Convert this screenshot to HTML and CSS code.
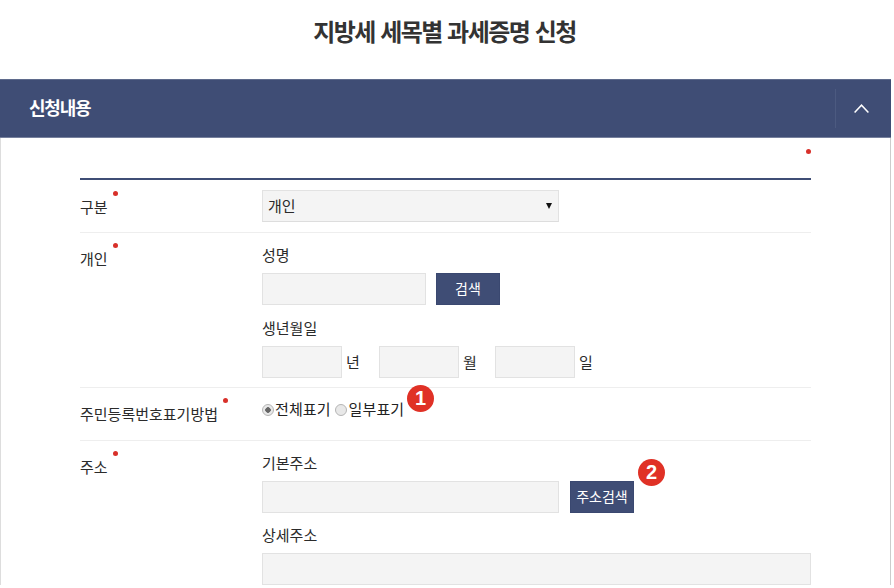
FILE: index.html
```html
<!DOCTYPE html>
<html lang="ko">
<head>
    <meta charset="UTF-8">
    <meta name="viewport" content="width=device-width, initial-scale=1.0">
    <link rel="stylesheet" href="styles.css">
    <title>지방세 세목별 과세증명 신청</title>
</head>
<body>
    <h1 class="page-title">지방세 세목별 과세증명 신청</h1>
    <section class="panel">
        <div class="panel-head">
            <h2 class="panel-title">신청내용</h2>
            <button class="panel-toggle" type="button" aria-label="접기">
                <svg width="15" height="9" viewBox="0 0 15 9"><path d="M.6 8.4 7.5 1.2l6.9 7.2" fill="none" stroke="#fff" stroke-width="1.5"/></svg>
            </button>
        </div>
        <div class="panel-body">
            <span class="dot dot-top"></span>
            <div class="form-table">
                <div class="row row-kind">
                    <div class="label"><span class="req">구분</span></div>
                    <div class="field">
                        <div class="select-wrap">
                            <select class="select"><option>개인</option></select>
                        </div>
                    </div>
                </div>
                <div class="row row-person">
                    <div class="label"><span class="req">개인</span></div>
                    <div class="field">
                        <div class="sub-label">성명</div>
                        <div class="line">
                            <input class="input input-name" type="text">
                            <button class="btn btn-search" type="button">검색</button>
                        </div>
                        <div class="sub-label sub-label-next">생년월일</div>
                        <div class="line line-date">
                            <input class="input input-date" type="text"><span class="unit unit-year">년</span>
                            <input class="input input-date" type="text"><span class="unit unit-month">월</span>
                            <input class="input input-date" type="text"><span class="unit">일</span>
                        </div>
                    </div>
                </div>
                <div class="row row-radio">
                    <div class="label"><span class="req">주민등록번호표기방법</span></div>
                    <div class="field radios">
                        <label class="radio"><input type="radio" name="rrn" checked>전체표기</label>
                        <label class="radio"><input type="radio" name="rrn">일부표기<span class="badge badge-one">1</span></label>
                    </div>
                </div>
                <div class="row row-addr">
                    <div class="label"><span class="req">주소</span></div>
                    <div class="field">
                        <div class="sub-label sub-label-addr">기본주소</div>
                        <div class="line">
                            <input class="input input-addr" type="text">
                            <button class="btn btn-addr" type="button">주소검색<span class="badge badge-two">2</span></button>
                        </div>
                        <div class="sub-label sub-label-next">상세주소</div>
                        <div class="line">
                            <input class="input input-full" type="text">
                        </div>
                    </div>
                </div>
            </div>
        </div>
    </section>
</body>
</html>
```

FILE: styles.css
```css
html {
    overflow: hidden;
}
body {
    margin: 0;
    width: 891px;
    height: 588px;
    overflow: hidden;
    background: #fff;
    color: #2b2b2b;
    font-family: "Noto Sans CJK KR", "Noto Sans", sans-serif;
    font-size: 15px;
}
.page-title {
    margin: 0;
    height: 79px;
    padding: 13px 2px 0 0;
    box-sizing: border-box;
    text-align: center;
    font-size: 24px;
    line-height: 36px;
    font-weight: 700;
    letter-spacing: -1.5px;
    color: #333;
}
.panel {
    border-right: 1px solid #ccc;
    border-left: 1px solid #ddd;
}
.panel-head {
    display: flex;
    align-items: center;
    justify-content: space-between;
    height: 59px;
    margin: 0 -1px;
    box-sizing: border-box;
    padding-left: 29px;
    background: #3f4d75;
    border-top: 1px solid #5f6b8c;
    border-bottom: 1px solid #76809d;
}
.panel-title {
    margin: 0 0 4px;
    font-size: 18px;
    font-weight: 700;
    letter-spacing: -1.2px;
    color: #fff;
}
.panel-toggle {
    width: 56px;
    height: 39px;
    padding: 0 4px 0 0;
    background: none;
    border: 0;
    border-left: 1px solid #4c5a80;
    display: flex;
    align-items: center;
    justify-content: center;
}
.panel-body {
    position: relative;
    padding: 40px 79px 0;
}
.dot {
    position: absolute;
    width: 5px;
    height: 5px;
    border-radius: 50%;
    background: #d8302a;
}
.dot-top {
    top: 11px;
    left: 805px;
}
.form-table {
    border-top: 2px solid #3f4d75;
}
.row {
    display: flex;
    border-bottom: 1px solid #eee;
}
.label {
    width: 182px;
    flex: none;
    line-height: 20px;
}
.req {
    position: relative;
}
.req::after {
    content: "";
    position: absolute;
    top: -5px;
    right: -10px;
    width: 5px;
    height: 5px;
    border-radius: 50%;
    background: #d8302a;
}
.field {
    flex: 1;
}
.row-kind {
    height: 53px;
    box-sizing: border-box;
    padding-top: 10px;
}
.row-kind .label {
    padding-top: 7px;
}
.select-wrap {
    position: relative;
    width: 297px;
}
.select-wrap::after {
    content: "";
    position: absolute;
    top: 13px;
    right: 7px;
    border-left: 3px solid transparent;
    border-right: 3px solid transparent;
    border-top: 6px solid #111;
}
.select {
    display: block;
    width: 100%;
    height: 32px;
    padding: 0 4px 2px 5px;
    appearance: none;
    -webkit-appearance: none;
    border: 1px solid #e2e2e2;
    border-bottom-color: #ddd;
    border-radius: 0;
    background: #f4f4f4;
    font: inherit;
    color: #2b2b2b;
}
.input {
    height: 32px;
    box-sizing: border-box;
    padding: 0 4px;
    border: 1px solid #e2e2e2;
    background: #f4f4f4;
    border-radius: 0;
}
.row-person {
    height: 155px;
    box-sizing: border-box;
    padding-top: 12px;
}
.row-person .label {
    padding-top: 4px;
}
.sub-label {
    height: 28px;
    line-height: 20px;
}
.sub-label-next {
    margin-top: 12px;
}
.row-person .sub-label-next {
    margin-top: 13px;
}
.line {
    display: flex;
    align-items: center;
}
.input-name {
    width: 164px;
    margin-right: 10px;
}
.btn {
    position: relative;
    height: 32px;
    padding: 0 0 3px;
    border: 1px solid #3a4870;
    background: #3f4d75;
    color: #fff;
    font: inherit;
    font-size: 14px;
}
.btn-search {
    width: 64px;
}
.input-date {
    width: 80px;
}
.unit {
    margin-left: 4px;
    width: 33px;
    line-height: 28px;
}
.unit-month {
    width: 32px;
}
.row-radio {
    height: 53px;
    box-sizing: border-box;
    padding-top: 10px;
}
.row-radio .label {
    padding-top: 6px;
}
.radios {
    display: flex;
    align-items: flex-start;
    gap: 4px;
}
.radio {
    position: relative;
    display: flex;
    align-items: center;
    height: 20px;
    color: #222;
    letter-spacing: .1px;
}
.radio input {
    appearance: none;
    -webkit-appearance: none;
    width: 12px;
    height: 12px;
    margin: 3px 1px 0 0;
    border: 1px solid #b5b5b5;
    border-radius: 50%;
    background: #e8e8e8;
}
.radio + .radio input {
    margin: 4px 2px 0 0;
}
.radio input:checked {
    background: radial-gradient(circle, #666 0 2.5px, #e8e8e8 3px);
}
.badge {
    position: absolute;
    width: 27px;
    height: 27px;
    border-radius: 50%;
    background: #e03126;
    color: #fff;
    font-family: "Liberation Sans", sans-serif;
    font-size: 20px;
    font-weight: 700;
    line-height: 27px;
    text-align: center;
}
.badge-one {
    top: -13px;
    right: -30px;
}
.badge-two {
    top: -23px;
    right: -32px;
}
.row-addr {
    border-bottom: 0;
    padding-top: 10px;
}
.row-addr .label {
    padding-top: 6px;
}
.sub-label-addr {
    height: 28px;
    padding-top: 2px;
}
.input-addr {
    width: 297px;
    margin-right: 11px;
}
.btn-addr {
    width: 64px;
}
.input-full {
    width: 549px;
}
```
